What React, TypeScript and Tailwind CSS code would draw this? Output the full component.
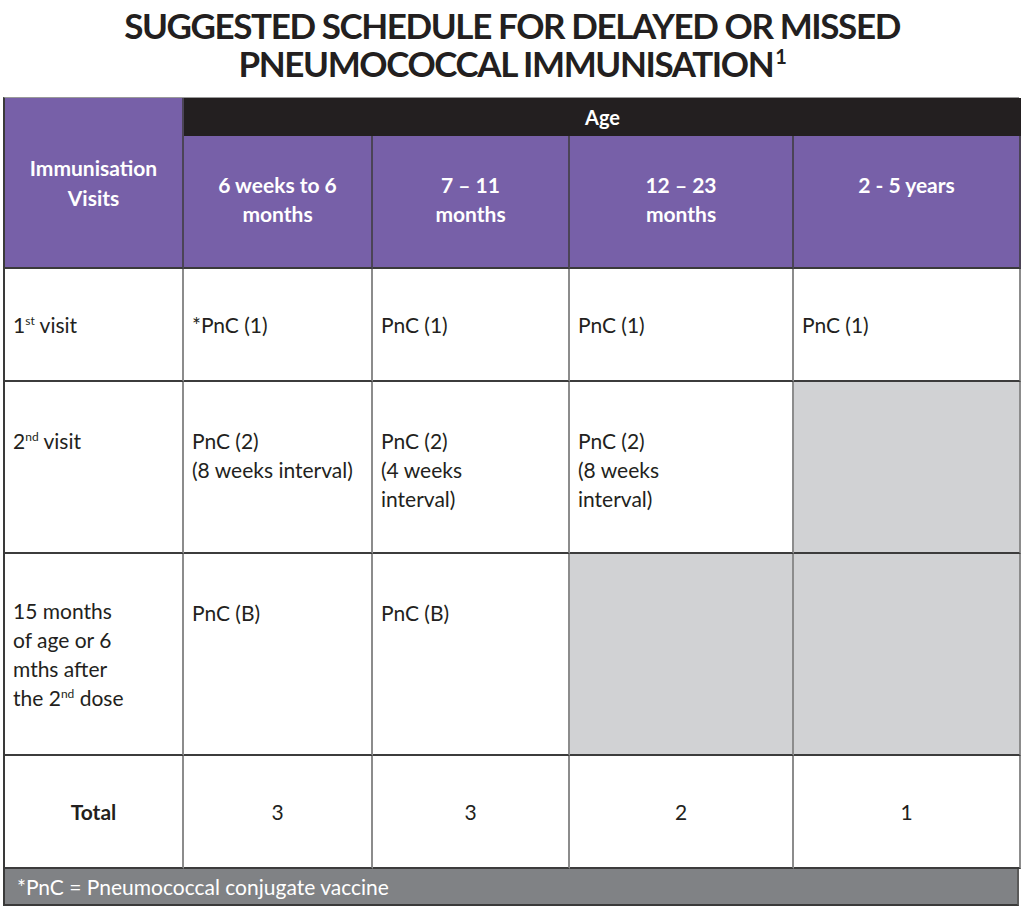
import React from 'react';

const font = { fontFamily: 'Lato, "Open Sans", sans-serif' };

const Sup = ({ children }: { children: React.ReactNode }) => (
  <sup className="text-[12px] leading-none relative -top-[8px]">{children}</sup>
);

const Head = ({ children }: { children: React.ReactNode }) => (
  <div className="bg-[#7760a8] border-r-2 border-b-2 border-r-[#4b4456] border-b-[#3a3a3a] text-white font-bold text-[21px] leading-[29px] text-center pt-[34px] px-3">
    {children}
  </div>
);

const Cell = ({
  children,
  grey,
  top,
  center
}: {
  children?: React.ReactNode;
  grey?: boolean;
  top?: boolean;
  center?: boolean;
}) => (
  <div
    className={[
      'border-r-2 border-b-2 border-r-[#8c8c8c] border-b-[#3c3c3c] text-[21px] leading-[29px] text-[#231f20] px-[8px] flex',
      grey ? 'bg-[#d1d2d4]' : 'bg-white',
      top ? 'items-start pt-[44px]' : 'items-center',
      center ? 'justify-center text-center' : ''
    ].join(' ')}
  >
    <div>{children}</div>
  </div>
);

export default function App() {
  return (
    <div className="w-[1024px] h-[908px] bg-white" style={font}>
      <h1 className="text-center font-bold text-[#231f20] text-[35px] leading-[38px] pt-[6px] tracking-[-1.4px]">
        SUGGESTED SCHEDULE FOR DELAYED OR MISSED
        <br />
        PNEUMOCOCCAL IMMUNISATION
        <sup className="text-[20px] leading-none relative -top-[13px] ml-[2px]">1</sup>
      </h1>

      <div className="ml-[3px] mt-[15px] w-[1016px] border-l-2 border-l-[#3a3a3a] border-t border-t-[#9a9a9a]">
        <div className="grid grid-cols-[179px_189px_197px_224px_227px] grid-rows-[38px_133px_113px_172px_202px_113px]">
          <div className="row-span-2 bg-[#7760a8] border-r-2 border-b-2 border-r-[#4b4456] border-b-[#3a3a3a] text-white font-bold text-[21px] leading-[30px] flex items-center justify-center text-center">
            <div>
              Immunisation
              <br />
              Visits
            </div>
          </div>
          <div className="col-span-4 bg-[#231f20] text-white font-bold text-[20px] flex items-center justify-center">
            Age
          </div>

          <Head>6 weeks to 6 months</Head>
          <Head>
            7 – 11
            <br />
            months
          </Head>
          <Head>
            12 – 23
            <br />
            months
          </Head>
          <Head>2 - 5 years</Head>

          <Cell>
            <span>
              1<Sup>st</Sup> visit
            </span>
          </Cell>
          <Cell>*PnC (1)</Cell>
          <Cell>PnC (1)</Cell>
          <Cell>PnC (1)</Cell>
          <Cell>PnC (1)</Cell>

          <Cell top>
            <span>
              2<Sup>nd</Sup> visit
            </span>
          </Cell>
          <Cell top>
            PnC (2)
            <br />
            (8 weeks interval)
          </Cell>
          <Cell top>
            PnC (2)
            <br />
            (4 weeks
            <br />
            interval)
          </Cell>
          <Cell top>
            PnC (2)
            <br />
            (8 weeks
            <br />
            interval)
          </Cell>
          <Cell grey />

          <Cell>
            15 months
            <br />
            of age or 6
            <br />
            mths after
            <br />
            the 2<Sup>nd</Sup> dose
          </Cell>
          <Cell top>PnC (B)</Cell>
          <Cell top>PnC (B)</Cell>
          <Cell grey />
          <Cell grey />

          <Cell center>
            <span className="font-bold">Total</span>
          </Cell>
          <Cell center>3</Cell>
          <Cell center>3</Cell>
          <Cell center>2</Cell>
          <Cell center>1</Cell>
        </div>
        <div className="h-[37px] bg-[#808285] border-r-2 border-b-2 border-r-[#5a5a5a] border-b-[#3a3a3a] text-white text-[21px] flex items-center pl-[12px]">
          *PnC = Pneumococcal conjugate vaccine
        </div>
      </div>
    </div>
  );
}
